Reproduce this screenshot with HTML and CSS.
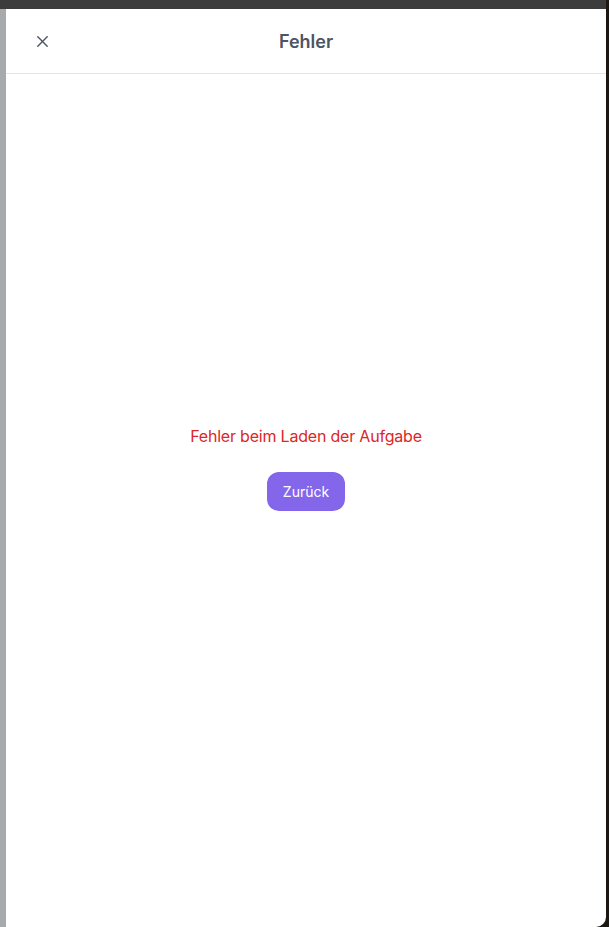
FILE: index.html
```html
<!DOCTYPE html>
<html lang="de">
<head>
<meta charset="utf-8">
<title>Fehler</title>
<link rel="stylesheet" href="styles.css">
</head>
<body>
<div class="frame">
  <div class="topbar"></div>
  <div class="middle">
    <div class="left-strip"></div>
    <div class="panel">
      <header class="header">
        <button class="close" aria-label="Schließen">
          <svg width="11" height="11" viewBox="0 0 11 11"><path d="M0.8 0.8L10.2 10.2M10.2 0.8L0.8 10.2" stroke="#4b5563" stroke-width="1.4" stroke-linecap="round"/></svg>
        </button>
        <h1 class="title">Fehler</h1>
        <span class="spacer"></span>
      </header>
      <main class="content">
        <p class="error">Fehler beim Laden der Aufgabe</p>
        <button class="back">Zurück</button>
      </main>
    </div>
  </div>
</div>
</body>
</html>
```
FILE: styles.css
```css
* { box-sizing: border-box; }
html, body { margin: 0; padding: 0; height: 100%; }
body {
  background: #1c1711;
  font-family: Inter, "Noto Sans", "Liberation Sans", sans-serif;
}
.frame {
  height: 927px;
  width: 609px;
  display: flex;
  flex-direction: column;
}
.topbar {
  height: 9px;
  background: #3c3c3c;
  margin-right: 3px;
  flex: none;
}
.middle {
  flex: 1;
  display: flex;
  margin-right: 3px;
}
.left-strip {
  width: 6px;
  background: #a8a9aa;
  flex: none;
}
.panel {
  flex: 1;
  background: #ffffff;
  border-bottom-right-radius: 10px;
  display: flex;
  flex-direction: column;
}
.header {
  height: 65px;
  border-bottom: 1px solid #e5e5e5;
  display: flex;
  align-items: center;
  padding: 0 24px;
  flex: none;
}
.close {
  width: 24px;
  height: 24px;
  border: 0;
  background: none;
  padding: 0;
  display: flex;
  align-items: center;
  justify-content: center;
}
.title {
  flex: 1;
  margin: 0;
  text-align: center;
  font-size: 18px;
  font-weight: 600;
  color: #4b5563;
}
.spacer { width: 24px; }
.content {
  flex: 1;
  display: flex;
  flex-direction: column;
  align-items: center;
  justify-content: center;
  padding-bottom: 66px;
}
.error {
  margin: 0 0 24px;
  color: #dc2626;
  font-size: 16px;
  line-height: 24px;
  letter-spacing: -0.2px;
}
.back {
  border: 0;
  background: #8366ea;
  color: #ffffff;
  font-family: inherit;
  font-size: 14px;
  height: 39px;
  padding: 0 16px;
  border-radius: 12px;
}
```
